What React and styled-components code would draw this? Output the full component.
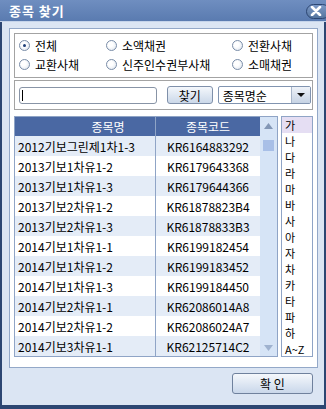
import styled, { createGlobalStyle } from "styled-components";

const GlobalStyle = createGlobalStyle`
  body {
    margin: 0;
    font-family: "Noto Sans CJK KR", "Noto Sans", sans-serif;
    font-size: 12px;
    color: #000;
  }
`;

const OPTIONS = [
  { id: "all", label: "전체", checked: true },
  { id: "small", label: "소액채권" },
  { id: "conv", label: "전환사채" },
  { id: "exch", label: "교환사채" },
  { id: "bw", label: "신주인수권부사채" },
  { id: "retail", label: "소매채권" },
];

const ROWS = [
  ["2012기보그린제1차1-3", "KR6164883292"],
  ["2013기보1차유1-2", "KR6179643368"],
  ["2013기보1차유1-3", "KR6179644366"],
  ["2013기보2차유1-2", "KR61878823B4"],
  ["2013기보2차유1-3", "KR61878833B3"],
  ["2014기보1차유1-1", "KR6199182454"],
  ["2014기보1차유1-2", "KR6199183452"],
  ["2014기보1차유1-3", "KR6199184450"],
  ["2014기보2차유1-1", "KR62086014A8"],
  ["2014기보2차유1-2", "KR62086024A7"],
  ["2014기보3차유1-1", "KR62125714C2"],
];

const LETTERS = ["가", "나", "다", "라", "마", "바", "사", "아", "자", "차", "카", "타", "파", "하", "A~Z"];

const App = () => {
  return (
    <>
      <GlobalStyle />
      <Window>
        <TitleBar>
          <Title>종목 찾기</Title>
          <CloseButton>
            <svg width="12" height="10" viewBox="0 0 12 10">
              <path d="M2 1 L10 9 M10 1 L2 9" stroke="#fff" strokeWidth="2.6" strokeLinecap="round" />
            </svg>
          </CloseButton>
        </TitleBar>
        <Body>
          <Panel>
            <GroupBox>
              {OPTIONS.map((opt) => (
                <RadioItem key={opt.id}>
                  <Radio checked={opt.checked} />
                  {opt.label}
                </RadioItem>
              ))}
            </GroupBox>
            <SearchBox>
              <TextInput />
              <SearchButton>찾기</SearchButton>
              <Select>
                <SelectText>종목명순</SelectText>
                <SelectArrow>
                  <svg width="8" height="4" viewBox="0 0 8 4">
                    <path d="M0 0 H8 L4 4 Z" fill="#111" />
                  </svg>
                </SelectArrow>
              </Select>
            </SearchBox>
            <ListArea>
              <Table>
                <Grid>
                  <HeaderRow>
                    <HeadCell first>종목명</HeadCell>
                    <HeadCell>종목코드</HeadCell>
                  </HeaderRow>
                  {ROWS.map((row, i) => (
                    <Row key={row[1]} alt={i % 2 === 0}>
                      <NameCell>{row[0]}</NameCell>
                      <CodeCell>{row[1]}</CodeCell>
                    </Row>
                  ))}
                </Grid>
                <ScrollBar>
                  <ScrollArrow>
                    <svg width="9" height="6" viewBox="0 0 9 6">
                      <path d="M0 6 L4.5 0 L9 6 Z" fill="#8397b6" />
                    </svg>
                  </ScrollArrow>
                  <Thumb />
                  <Track />
                  <ScrollArrow>
                    <svg width="9" height="6" viewBox="0 0 9 6">
                      <path d="M0 0 L9 0 L4.5 6 Z" fill="#9fb2cf" />
                    </svg>
                  </ScrollArrow>
                </ScrollBar>
              </Table>
              <AlphaList>
                {LETTERS.map((l, i) => (
                  <Letter key={l} active={i === 0}>
                    {l}
                  </Letter>
                ))}
              </AlphaList>
            </ListArea>
          </Panel>
          <Footer>
            <OkButton>확 인</OkButton>
          </Footer>
        </Body>
      </Window>
    </>
  );
};

const Window = styled.div`
  width: 326px;
  height: 409px;
  display: flex;
  flex-direction: column;
  background: #dbe5f3;
  overflow: hidden;
`;

const TitleBar = styled.div`
  height: 22px;
  flex: none;
  display: flex;
  align-items: center;
  justify-content: space-between;
  padding-left: 9px;
  background: linear-gradient(#6f8ec0, #5a7bb0);
  border-bottom: 1px solid #c5d4ea;
  box-sizing: border-box;
`;

const Title = styled.div`
  color: #fff;
  font-size: 13px;
  font-weight: bold;
  letter-spacing: 1px;
`;

const CloseButton = styled.div`
  width: 24px;
  height: 15px;
  margin-right: -4px;
  margin-top: 1px;
  display: flex;
  align-items: center;
  justify-content: center;
  padding-right: 4px;
  box-sizing: border-box;
  border: 1px solid #2c4672;
  border-radius: 8px;
  background: linear-gradient(#7b98c6, #56769f);
`;

const Body = styled.div`
  flex: 1;
  display: flex;
  flex-direction: column;
  border: solid #2c4672;
  border-width: 0 2px 4px 2px;
  padding: 6px 6px 0 7px;
`;

const Panel = styled.div`
  height: 340px;
  box-sizing: border-box;
  background: #fff;
  border: 1px solid #93a8c8;
  padding: 4px 4px 0 4px;
  display: flex;
  flex-direction: column;
`;

const GroupBox = styled.div`
  height: 45px;
  box-sizing: border-box;
  border: 1px solid #a3a3a3;
  display: grid;
  grid-template-columns: 87px 126px 1fr;
  grid-auto-rows: 19px;
  padding: 2px 0 0 4px;
`;

const RadioItem = styled.label`
  display: flex;
  align-items: center;
  gap: 5px;
  font-size: 12px;
  white-space: nowrap;
`;

const Radio = styled.span`
  width: 11px;
  height: 11px;
  box-sizing: border-box;
  border-radius: 50%;
  border: 1px solid #7a8da8;
  background: radial-gradient(circle at 40% 40%, #ffffff 30%, #d9e1eb 100%);
  display: flex;
  align-items: center;
  justify-content: center;
  &::after {
    content: "";
    width: 3px;
    height: 3px;
    border-radius: 50%;
    background: ${(p) => (p.checked ? "#1f3f78" : "transparent")};
  }
`;

const SearchBox = styled.div`
  margin-top: 2px;
  height: 30px;
  box-sizing: border-box;
  border: 1px solid #a3a3a3;
  display: flex;
  align-items: center;
  padding: 0 1px 0 4px;
`;

const TextInput = styled.div`
  width: 139px;
  height: 17px;
  box-sizing: border-box;
  border: 1px solid #8894a6;
  border-radius: 3px;
  background: #fff;
  position: relative;
  &::after {
    content: "";
    position: absolute;
    left: 2px;
    top: 2px;
    width: 1px;
    height: 11px;
    background: #000;
  }
`;

const SearchButton = styled.div`
  margin-left: 10px;
  width: 46px;
  height: 18px;
  box-sizing: border-box;
  border: 1px solid #7f90aa;
  border-radius: 3px;
  background: linear-gradient(#f4f7fb, #cbd8e9);
  display: flex;
  align-items: center;
  justify-content: center;
  font-size: 12px;
`;

const Select = styled.div`
  margin-left: 5px;
  width: 94px;
  height: 18px;
  box-sizing: border-box;
  border: 1px solid #8194b0;
  border-radius: 2px;
  background: #fff;
  display: flex;
  align-items: stretch;
`;

const SelectText = styled.div`
  flex: 1;
  display: flex;
  align-items: center;
  padding-left: 4px;
  font-size: 12px;
`;

const SelectArrow = styled.div`
  width: 18px;
  border-left: 1px solid #a8b6ca;
  background: linear-gradient(#eef2f8, #c6d3e4);
  display: flex;
  align-items: center;
  justify-content: center;
`;

const ListArea = styled.div`
  margin-top: 6px;
  display: flex;
  gap: 3px;
  height: 241px;
`;

const Table = styled.div`
  width: 264px;
  box-sizing: border-box;
  border: 1px solid #8fa4c6;
  display: flex;
  background: #fff;
`;

const Grid = styled.div`
  width: 245px;
  display: flex;
  flex-direction: column;
`;

const HeaderRow = styled.div`
  height: 19px;
  display: flex;
  background: #4a68a3;
  color: #fff;
  font-size: 12px;
`;

const HeadCell = styled.div`
  width: ${(p) => (p.first ? "94px" : "104px")};
  border-right: ${(p) => (p.first ? "1px solid #8fa4c6" : "none")};
  padding-left: ${(p) => (p.first ? "46px" : "0")};
  display: flex;
  align-items: center;
  justify-content: center;
`;

const Row = styled.div`
  height: 20px;
  display: flex;
  background: ${(p) => (p.alt ? "#e4ecf7" : "#fff")};
  font-size: 12px;
`;

const NameCell = styled.div`
  width: 137px;
  padding-left: 3px;
  border-right: 1px solid #8fa4c6;
  display: flex;
  align-items: center;
  white-space: nowrap;
`;

const CodeCell = styled.div`
  width: 104px;
  display: flex;
  align-items: center;
  justify-content: center;
`;

const ScrollBar = styled.div`
  width: 17px;
  background: #d6e4f6;
  display: flex;
  flex-direction: column;
  align-items: center;
`;

const ScrollArrow = styled.div`
  height: 17px;
  display: flex;
  align-items: center;
  justify-content: center;
`;

const Thumb = styled.div`
  width: 11px;
  height: 11px;
  margin-top: 6px;
  background: #a8bfe7;
`;

const Track = styled.div`
  flex: 1;
`;

const AlphaList = styled.div`
  width: 33px;
  box-sizing: border-box;
  border: 1px solid #8fa4c6;
  background: #fff;
  display: flex;
  flex-direction: column;
`;

const Letter = styled.div`
  height: 16px;
  line-height: 16px;
  padding-left: 3px;
  font-size: 11px;
  background: ${(p) => (p.active ? "#e5def3" : "transparent")};
`;

const Footer = styled.div`
  display: flex;
  justify-content: flex-end;
  padding: 5px 5px 0 0;
`;

const OkButton = styled.div`
  width: 81px;
  height: 21px;
  box-sizing: border-box;
  border: 1px solid #6f819d;
  border-radius: 3px;
  background: linear-gradient(#f5f8fc, #c9d7ea);
  display: flex;
  align-items: center;
  justify-content: center;
  font-size: 12px;
`;

export default App;
